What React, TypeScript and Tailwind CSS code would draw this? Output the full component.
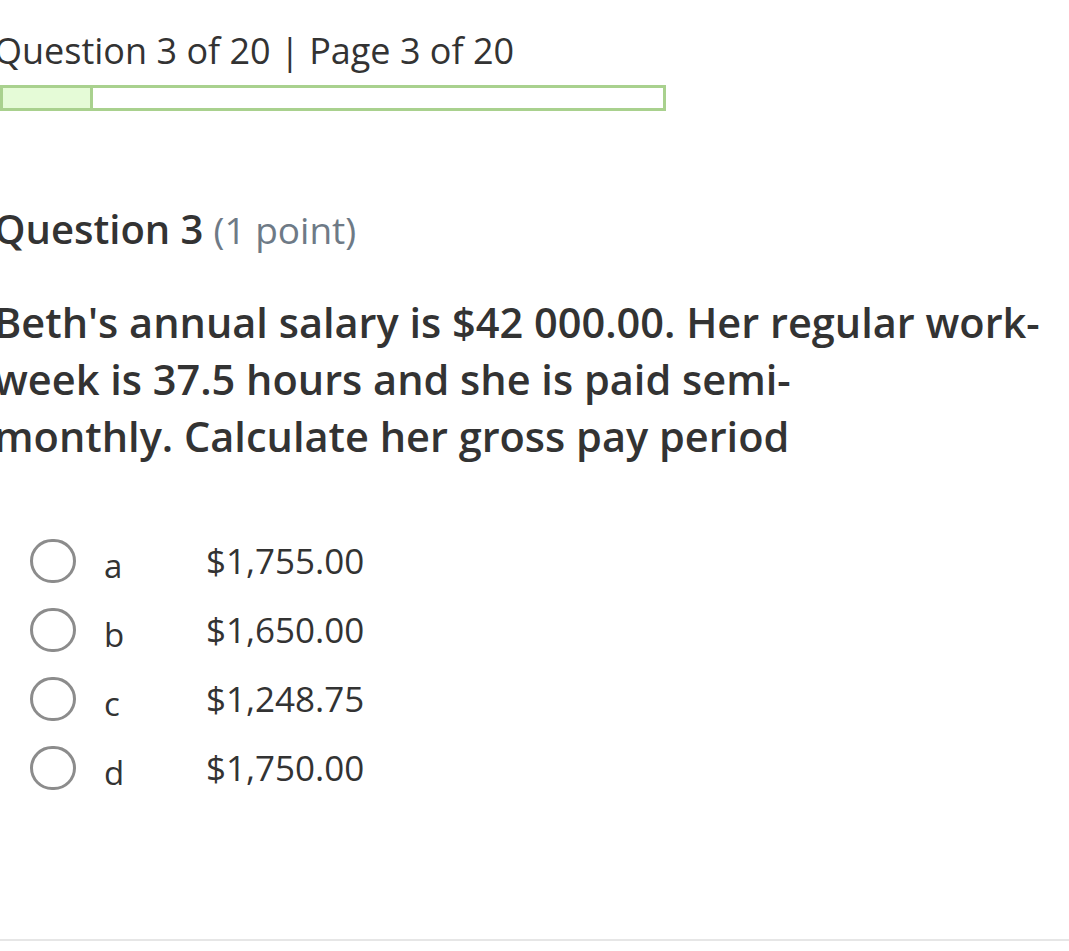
import React from "react";

const options = [
  { letter: "a", amount: "$1,755.00" },
  { letter: "b", amount: "$1,650.00" },
  { letter: "c", amount: "$1,248.75" },
  { letter: "d", amount: "$1,750.00" },
];

export default function App() {
  return (
    <div
      className="relative w-[1069px] h-[951px] overflow-hidden bg-white text-[#333333]"
      style={{ fontFamily: '"Open Sans", "Noto Sans", sans-serif' }}
    >
      <div className="flex flex-col -ml-[6px]">
        <div className="pt-[27px] text-[36px] leading-[48px] font-medium whitespace-nowrap">
          Question 3 of 20 | Page 3 of 20
        </div>
        <div className="mt-[10px] ml-[6px] flex h-[26px] w-[666px] border-[3px] border-[#a9d18e]">
          <div className="w-[90px] h-full bg-[#e5fbd7] border-r-[3px] border-[#a9d18e]" />
          <div className="flex-1" />
        </div>
        <div className="mt-[90px] flex items-baseline gap-[10px] whitespace-nowrap">
          <span className="text-[40px] font-semibold leading-[56px]">Question 3</span>
          <span className="text-[37px] text-[#6e7a86]">(1 point)</span>
        </div>
        <p className="mt-[36px] w-[1070px] text-[41.5px] font-semibold leading-[57px] whitespace-nowrap">
          Beth's annual salary is $42 000.00. Her regular work-
          <br />
          week is 37.5 hours and she is paid semi-
          <br />
          monthly. Calculate her gross pay period
        </p>
        <div className="mt-[74px] ml-[36px] flex flex-col gap-[25px]">
          {options.map((o) => (
            <div key={o.letter} className="flex items-center h-[44px]">
              <div className="w-[46px] h-[44px] rounded-full border-[3px] border-[#8c8c8c] shrink-0" />
              <span className="ml-[28px] w-[102px] text-[33px] leading-none pt-[10px]">{o.letter}</span>
              <span className="text-[35px] leading-none">{o.amount}</span>
            </div>
          ))}
        </div>
      </div>
      <div className="absolute left-0 right-0 top-[939px] h-[2px] bg-[#e6e6e6]" />
    </div>
  );
}
